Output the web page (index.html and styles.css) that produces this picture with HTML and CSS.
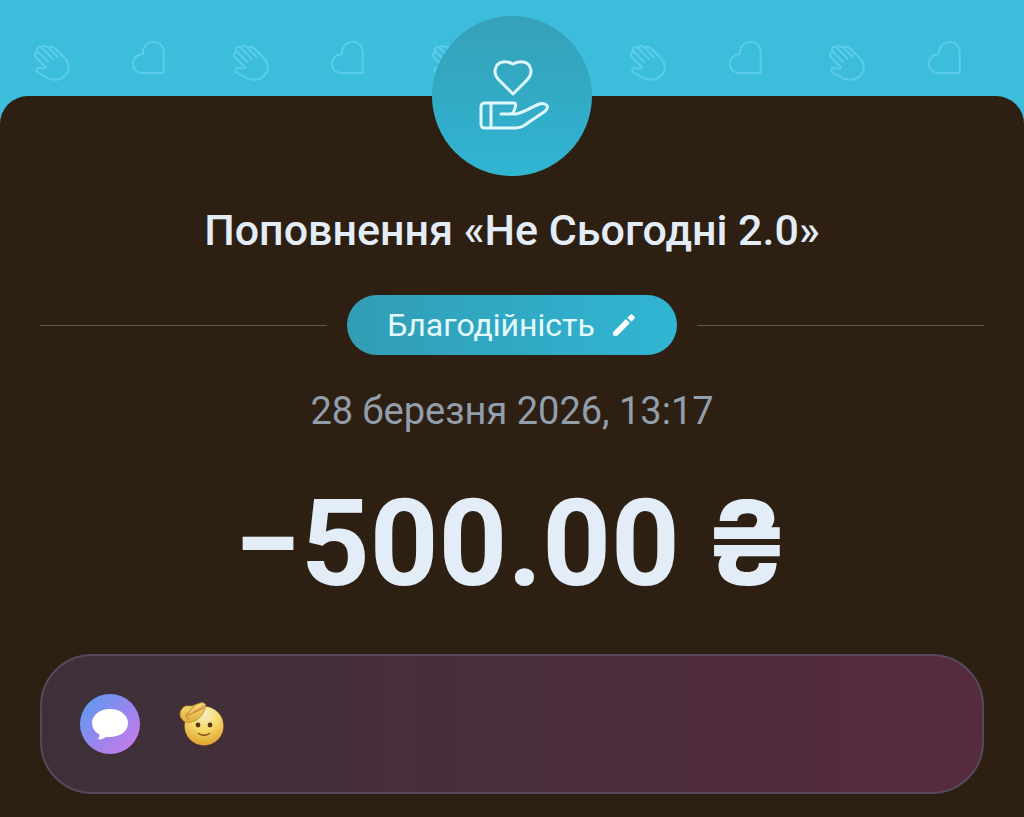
FILE: index.html
```html
<!DOCTYPE html>
<html lang="uk">
<head>
    <meta charset="UTF-8">
    <meta name="viewport" content="width=device-width, initial-scale=1.0">
    <title>Поповнення «Не Сьогодні 2.0»</title>
    <link rel="stylesheet" href="styles.css">
</head>
<body>
    <svg class="symbols" aria-hidden="true">
        <symbol id="hand" viewBox="0 0 40 48">
            <path d="M14.5 29.5 L4.5 19.5 C1.5 16 4.5 12.5 7.5 15 L16.5 24 M6 14 C4 10 7 7 10.5 10 L21 21 M10 10 C11 7 15 8 17 10 L26 19 M17 9.5 C19 8 22 9 24 11 L33 20 C38 25 38.5 32 34 37 C29 43 20 43 14 39 L6 34.5 C3 32 5 29 9 30 C11 31 13 30.5 14.5 29.5"/>
        </symbol>
        <symbol id="heart" viewBox="0 0 40 48">
            <path d="M33 35 H12 C-1 35 -1 17 12 16 C12 0 33 0 33 15 Z"/>
        </symbol>
    </svg>

    <header class="pattern" aria-hidden="true">
        <svg><use href="#hand"/></svg>
        <svg><use href="#heart"/></svg>
        <svg><use href="#hand"/></svg>
        <svg><use href="#heart"/></svg>
        <svg><use href="#hand"/></svg>
        <svg><use href="#heart"/></svg>
        <svg><use href="#hand"/></svg>
        <svg><use href="#heart"/></svg>
        <svg><use href="#hand"/></svg>
        <svg><use href="#heart"/></svg>
    </header>

    <main class="card">
        <div class="badge">
            <svg viewBox="0 0 160 160" aria-hidden="true">
                <path d="M81 94 L67 80 C60 73 63 63 71 62 C75 61 79 63 81 64 C83 63 87 61 91 62 C99 63 102 73 95 80 Z" transform="translate(0 -16)"/>
                <path d="M59 87 V112 M69 98 H84 C91 97 100 91 107 88 C114 86 119 91 112 96 L97 106 C92 110 89 112 83 112 H53 C50 112 49 111 49 108 V91 C49 88 50 87 53 87 H82 C84 87 84 89 83 92 C82 96 81 98 78 98"/>
            </svg>
        </div>

        <h1 class="title">Поповнення «Не Сьогодні 2.0»</h1>

        <div class="category-row">
            <button class="category" type="button">
                Благодійність
                <svg viewBox="0 0 24 24" aria-hidden="true">
                    <path d="M2 18.5 V22 H5.8 L17.5 10.2 L13.8 6.5 Z M18.8 8.9 L21.3 6.4 C22.2 5.5 22.2 4.9 21.3 4 L20 2.7 C19.1 1.8 18.5 1.8 17.6 2.7 L15.1 5.2 Z"/>
                </svg>
            </button>
        </div>

        <time class="date" datetime="2026-03-28T13:17">28 березня 2026, 13:17</time>
        <p class="amount">−500.00 <span class="currency">₴</span></p>

        <div class="comment">
            <svg class="bubble" viewBox="0 0 60 60" aria-hidden="true">
                <defs>
                    <linearGradient id="bubbleFill" x1="0" y1="0" x2="1" y2="1">
                        <stop offset="0.1" stop-color="#609af0"/>
                        <stop offset="0.5" stop-color="#9386ee"/>
                        <stop offset="0.9" stop-color="#c77de9"/>
                    </linearGradient>
                </defs>
                <circle cx="30" cy="30" r="30" fill="url(#bubbleFill)"/>
                <path fill="#fff" d="M30 15 C40 15 48 21 48 29 C48 38 39 43 30 43 L26 43 C23 45 20 46 18 45 C19 43 20 42 19 40 C15 38 12 34 12 29 C12 21 20 15 30 15 Z"/>
            </svg>
            <svg class="salute" viewBox="0 0 48 48" role="img" aria-label="🫡">
                <defs>
                    <radialGradient id="faceFill" cx="0.5" cy="0.2" r="0.8">
                        <stop offset="0" stop-color="#f5f0c4"/>
                        <stop offset="0.5" stop-color="#f5d96a"/>
                        <stop offset="1" stop-color="#e0a02c"/>
                    </radialGradient>
                    <linearGradient id="palmFill" x1="0" y1="0" x2="0" y2="1">
                        <stop offset="0" stop-color="#f5dc78"/>
                        <stop offset="1" stop-color="#e0ad3c"/>
                    </linearGradient>
                </defs>
                <circle cx="26" cy="26" r="19.5" fill="url(#faceFill)"/>
                <circle cx="20" cy="25" r="2.4" fill="#5a3410"/>
                <circle cx="32" cy="25" r="2.4" fill="#5a3410"/>
                <path d="M20.5 33.5 Q26 37 31.5 33.5" fill="none" stroke="#7c4a14" stroke-width="1.4" stroke-linecap="round"/>
                <path d="M4 9 C6 5 10 6 14 6 L22 3 C26 2 29 4 27 8 C26 13 22 19 16 21 C11 23 6 23 4 19 C1 16 2 11 4 9 Z" fill="url(#palmFill)" stroke="#b98428" stroke-width="0.8"/>
                <path d="M16 12 L26 6" fill="none" stroke="#eda366" stroke-width="2.4" stroke-linecap="round"/>
                <path d="M17 5 L9 14 C8 16 11 15 13 14 L26 8 M9 14 C7 16 8 18 11 19" fill="none" stroke="#b87a28" stroke-width="0.9" stroke-linecap="round"/>
            </svg>
        </div>
    </main>
</body>
</html>
```

FILE: styles.css
```css
* {
    box-sizing: border-box;
}

body {
    margin: 0;
    min-height: 100vh;
    display: flex;
    flex-direction: column;
    background: #3cbddb;
    color: #e3edf8;
    font-family: Roboto, "Noto Sans", sans-serif;
}

.symbols {
    display: none;
}

.pattern {
    display: flex;
    height: 96px;
    padding: 38px 28px 0 2px;
}

.pattern svg {
    flex: 1;
    min-width: 0;
    height: 48px;
    fill: none;
    stroke: #5bcdea;
    stroke-width: 2;
    stroke-linejoin: round;
    stroke-linecap: round;
}

.card {
    flex: 1;
    display: flex;
    flex-direction: column;
    align-items: center;
    padding: 0 40px 24px;
    border-radius: 28px 28px 0 0;
    background: #2d1f12;
}

.badge {
    width: 160px;
    height: 160px;
    margin-top: -80px;
    border-radius: 50%;
    background: linear-gradient(#36a0b8, #30b5d3);
}

.badge svg {
    display: block;
    fill: none;
    stroke: #dff8ff;
    stroke-width: 3;
    stroke-linejoin: round;
    stroke-linecap: round;
}

.title {
    margin: 28px 0 0;
    font-size: 43px;
    font-weight: 500;
    line-height: 52px;
    text-align: center;
}

.category-row {
    display: flex;
    align-items: center;
    align-self: stretch;
    gap: 20px;
    margin-top: 39px;
}

.category-row::before,
.category-row::after {
    content: "";
    flex: 1;
    height: 1px;
    background: #62564a;
}

.category {
    display: flex;
    align-items: center;
    gap: 16px;
    height: 60px;
    padding: 0 40px;
    border: none;
    border-radius: 30px;
    background: linear-gradient(to right, #329db5, #30b5d3);
    color: #e6fbff;
    font-family: inherit;
    font-size: 32px;
    cursor: pointer;
}

.category svg {
    width: 26px;
    height: 26px;
    fill: #fff;
}

.date {
    margin-top: 32px;
    color: #929eac;
    font-size: 38px;
    line-height: 48px;
}

.amount {
    display: flex;
    align-items: baseline;
    gap: 24px;
    margin: 39px 0 40px;
    font-size: 120px;
    font-weight: 700;
    line-height: 140px;
}

.currency {
    font-family: Inter, sans-serif;
    font-size: 116px;
    line-height: 1;
}

.comment {
    display: flex;
    align-items: center;
    align-self: stretch;
    gap: 38px;
    padding: 38px;
    border: 2px solid #57495c;
    border-radius: 52px;
    background: linear-gradient(to right, #3d3038, #562b3e);
}

.bubble {
    width: 60px;
    height: 60px;
}

.salute {
    width: 48px;
    height: 48px;
}
```
